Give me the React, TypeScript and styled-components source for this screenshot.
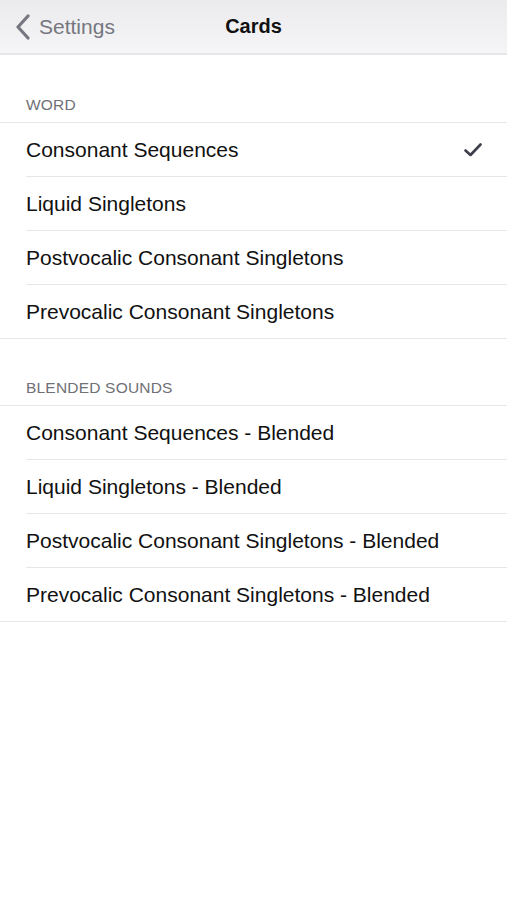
import styled, { createGlobalStyle } from "styled-components";

const Global = createGlobalStyle`
    html, body {
        margin: 0;
        padding: 0;
        background: #ffffff;
    }
    body {
        font-family: "Liberation Sans", Arial, sans-serif;
        -webkit-font-smoothing: antialiased;
    }
`

const Page = styled.div`
    width: 507px;
    min-height: 900px;
    background: #ffffff;
`

const NavBar = styled.header`
    position: relative;
    height: 53px;
    display: flex;
    align-items: center;
    justify-content: center;
    background: linear-gradient(180deg, #ebebed 0%, #f5f5f7 100%);
    border-bottom: 2px solid #e6e6e8;
`

const BackButton = styled.div`
    position: absolute;
    left: 15px;
    top: 0;
    bottom: 0;
    display: flex;
    align-items: center;
    gap: 8px;
    color: #75767f;
    font-size: 21px;
`

const NavTitle = styled.h1`
    margin: 0;
    font-size: 20px;
    font-weight: bold;
    color: #111111;
`

const SectionHeader = styled.div<{ top: number }>`
    padding: ${props => props.top}px 26px 8px;
    font-size: 15.5px;
    letter-spacing: 0.2px;
    color: #707076;
    text-transform: uppercase;
`

const Group = styled.ul`
    margin: 0;
    padding: 0;
    list-style: none;
    border-top: 1px solid #e6e6e8;
    border-bottom: 1px solid #e6e6e8;
`

const Row = styled.li`
    position: relative;
    height: 53px;
    display: flex;
    align-items: center;
    justify-content: space-between;
    padding: 0 25px 0 26px;
    font-size: 21px;
    color: #111111;
    & + & {
        margin-top: 1px;
    }
    & + &::before {
        content: "";
        position: absolute;
        top: -1px;
        left: 26px;
        right: 0;
        border-top: 1px solid #e6e6e8;
    }
`

const Check = () => (
    <svg width="18" height="14" viewBox="0 0 18 14">
        <path d="M1.5 7.5 L6.5 12 L16.5 1.5" fill="none" stroke="#3d3e4a" strokeWidth="2.6" strokeLinecap="round" strokeLinejoin="round" />
    </svg>
)

const Chevron = () => (
    <svg width="16" height="26" viewBox="0 0 16 26">
        <path d="M13 2 L3 13 L13 24" fill="none" stroke="#75767f" strokeWidth="3.2" strokeLinecap="round" strokeLinejoin="round" />
    </svg>
)

const sections = [
    {
        title: "Word",
        top: 41,
        items: [
            "Consonant Sequences",
            "Liquid Singletons",
            "Postvocalic Consonant Singletons",
            "Prevocalic Consonant Singletons",
        ],
    },
    {
        title: "Blended Sounds",
        top: 40,
        items: [
            "Consonant Sequences - Blended",
            "Liquid Singletons - Blended",
            "Postvocalic Consonant Singletons - Blended",
            "Prevocalic Consonant Singletons - Blended",
        ],
    },
]

const App = () => {
    const selected = "Consonant Sequences"

    return (
        <Page>
            <Global />
            <NavBar>
                <BackButton>
                    <Chevron />
                    Settings
                </BackButton>
                <NavTitle>Cards</NavTitle>
            </NavBar>
            {sections.map(section => (
                <section key={section.title}>
                    <SectionHeader top={section.top}>{section.title}</SectionHeader>
                    <Group>
                        {section.items.map(item => (
                            <Row key={item}>
                                {item}
                                {item === selected && <Check />}
                            </Row>
                        ))}
                    </Group>
                </section>
            ))}
        </Page>
    )
}

export default App;
